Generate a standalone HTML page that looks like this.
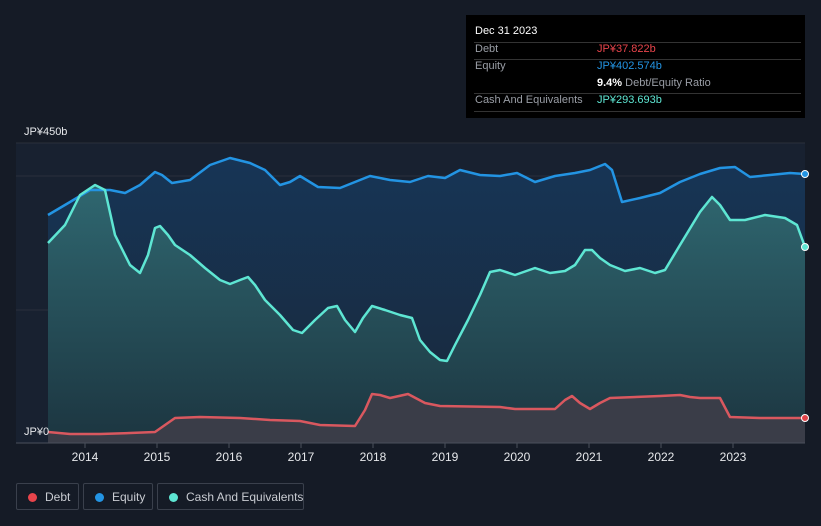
<!DOCTYPE html>
<html><head><meta charset="utf-8"><style>
html,body{margin:0;height:526px;overflow:hidden}
body{background:#151b26;width:821px;font-family:"Liberation Sans",sans-serif;position:relative}
.tt{position:absolute;left:466px;top:15px;width:339px;height:103px;background:#000;}
.tt div{position:absolute;font-size:11px;white-space:nowrap}
.hl{position:absolute;left:8px;width:327px;height:1px;background:#333}
.lg{position:absolute;top:483px;height:27px;border:1px solid #3a404c;border-radius:2px;color:#c9ccd2;font-size:12px;line-height:27px;box-sizing:border-box;white-space:nowrap}
.lg i{position:absolute;top:9px;left:11px;width:9px;height:9px;border-radius:50%}
.lg span{position:absolute;left:28px;top:0}
</style></head><body>
<svg width="821" height="526" style="position:absolute;left:0;top:0">
<defs>
<linearGradient id="eg" x1="0" y1="0" x2="0" y2="1"><stop offset="0" stop-color="#173556"/><stop offset="1" stop-color="#18283a"/></linearGradient>
<linearGradient id="cg" x1="0" y1="0" x2="0" y2="1"><stop offset="0" stop-color="#2f6770"/><stop offset="1" stop-color="#1c3540"/></linearGradient>
</defs>
<rect x="16" y="143" width="789" height="300" fill="#182130"/>
<line x1="16" y1="143" x2="805" y2="143" stroke="#2a303b"/>
<line x1="16" y1="176" x2="805" y2="176" stroke="#2a303b"/>
<line x1="16" y1="310" x2="805" y2="310" stroke="#2a303b"/>
<path fill="url(#eg)" d="M48,215 L70,202 90,190 110,190 125,193 140,185 155,172 162,175 172,183 190,180 210,165 230,158 250,163 265,170 280,185 290,182 300,176 318,187 340,188 370,176 390,180 410,182 428,176 445,178 460,170 480,175 500,176 517,173 535,182 555,176 575,173 590,170 605,164 612,170 622,202 640,198 660,193 680,182 700,174 720,168 735,167 750,177 770,175 790,173 805,174 L805,443 L48,443Z"/>
<path fill="url(#cg)" d="M48,243 L65,225 80,195 95,185 105,190 115,235 130,265 140,273 148,255 155,228 160,226 168,235 175,245 190,255 205,268 220,280 230,284 240,280 248,277 255,285 265,300 280,315 293,330 302,333 315,320 328,308 337,306 345,320 355,332 363,318 372,306 385,310 400,315 412,318 420,340 430,352 440,360 447,361 455,345 468,320 480,295 490,272 500,270 515,275 535,268 550,273 565,271 575,265 585,250 592,250 600,258 610,265 625,271 640,268 655,273 665,270 680,245 700,212 712,197 720,205 730,220 745,220 765,215 785,218 797,225 805,247 L805,443 L48,443Z"/>
<path fill="#3a3d48" d="M48,432 L70,434 100,434 130,433 155,432 165,425 175,418 200,417 240,418 270,420 300,421 320,425 355,426 365,410 372,394 380,395 390,398 408,394 425,403 440,406 500,407 515,409 555,409 565,400 572,396 580,403 590,409 600,403 610,398 660,396 680,395 690,397 700,398 720,398 730,417 760,418 805,418 L805,443 L48,443Z"/>
<path fill="none" stroke="#2394e3" stroke-width="2.5" stroke-linejoin="round" d="M48,215 L70,202 90,190 110,190 125,193 140,185 155,172 162,175 172,183 190,180 210,165 230,158 250,163 265,170 280,185 290,182 300,176 318,187 340,188 370,176 390,180 410,182 428,176 445,178 460,170 480,175 500,176 517,173 535,182 555,176 575,173 590,170 605,164 612,170 622,202 640,198 660,193 680,182 700,174 720,168 735,167 750,177 770,175 790,173 805,174"/>
<path fill="none" stroke="#5ee6d3" stroke-width="2.5" stroke-linejoin="round" d="M48,243 L65,225 80,195 95,185 105,190 115,235 130,265 140,273 148,255 155,228 160,226 168,235 175,245 190,255 205,268 220,280 230,284 240,280 248,277 255,285 265,300 280,315 293,330 302,333 315,320 328,308 337,306 345,320 355,332 363,318 372,306 385,310 400,315 412,318 420,340 430,352 440,360 447,361 455,345 468,320 480,295 490,272 500,270 515,275 535,268 550,273 565,271 575,265 585,250 592,250 600,258 610,265 625,271 640,268 655,273 665,270 680,245 700,212 712,197 720,205 730,220 745,220 765,215 785,218 797,225 805,247"/>
<path fill="none" stroke="#d9585f" stroke-width="2.5" stroke-linejoin="round" d="M48,432 L70,434 100,434 130,433 155,432 165,425 175,418 200,417 240,418 270,420 300,421 320,425 355,426 365,410 372,394 380,395 390,398 408,394 425,403 440,406 500,407 515,409 555,409 565,400 572,396 580,403 590,409 600,403 610,398 660,396 680,395 690,397 700,398 720,398 730,417 760,418 805,418"/>
<line x1="16" y1="443" x2="805" y2="443" stroke="#4a505c"/>
<g stroke="#4a505c"><line x1="85" y1="443" x2="85" y2="448"/><line x1="157" y1="443" x2="157" y2="448"/><line x1="229" y1="443" x2="229" y2="448"/><line x1="301" y1="443" x2="301" y2="448"/><line x1="373" y1="443" x2="373" y2="448"/><line x1="445" y1="443" x2="445" y2="448"/><line x1="517" y1="443" x2="517" y2="448"/><line x1="589" y1="443" x2="589" y2="448"/><line x1="661" y1="443" x2="661" y2="448"/><line x1="733" y1="443" x2="733" y2="448"/></g>
<g fill="#e6e8eb" font-size="12" text-anchor="middle" font-family="Liberation Sans"><text x="85" y="461">2014</text><text x="157" y="461">2015</text><text x="229" y="461">2016</text><text x="301" y="461">2017</text><text x="373" y="461">2018</text><text x="445" y="461">2019</text><text x="517" y="461">2020</text><text x="589" y="461">2021</text><text x="661" y="461">2022</text><text x="733" y="461">2023</text></g>
<text x="24" y="135" fill="#e6e8eb" font-size="11" font-family="Liberation Sans">JP¥450b</text>
<text x="24" y="435" fill="#e6e8eb" font-size="11" font-family="Liberation Sans">JP¥0</text>
<circle cx="805" cy="174" r="3.5" fill="#2394e3" stroke="#fff" stroke-width="1"/>
<circle cx="805" cy="247" r="3.5" fill="#5ee6d3" stroke="#fff" stroke-width="1"/>
<circle cx="805" cy="418" r="3.5" fill="#e0444a" stroke="#fff" stroke-width="1"/>
</svg>
<div class="tt">
<div style="left:9px;top:10px;color:#fff">Dec 31 2023</div>
<div class="hl" style="top:27px"></div>
<div style="left:9px;top:28px;color:#9a9ea6">Debt</div><div style="left:131px;top:28px;color:#e8444b">JP¥37.822b</div>
<div class="hl" style="top:44px"></div>
<div style="left:9px;top:45px;color:#9a9ea6">Equity</div><div style="left:131px;top:45px;color:#2394e3">JP¥402.574b</div>
<div style="left:131px;top:62px;color:#9a9ea6"><b style="color:#fff">9.4%</b> Debt/Equity Ratio</div>
<div class="hl" style="top:78px"></div>
<div style="left:9px;top:79px;color:#9a9ea6">Cash And Equivalents</div><div style="left:131px;top:79px;color:#5ee6d3">JP¥293.693b</div>
<div class="hl" style="top:96px"></div>
</div>
<div class="lg" style="left:16px;width:63px"><i style="background:#e8444b"></i><span>Debt</span></div>
<div class="lg" style="left:83px;width:70px"><i style="background:#2394e3"></i><span>Equity</span></div>
<div class="lg" style="left:157px;width:147px"><i style="background:#5ee6d3"></i><span>Cash And Equivalents</span></div>
</body></html>
